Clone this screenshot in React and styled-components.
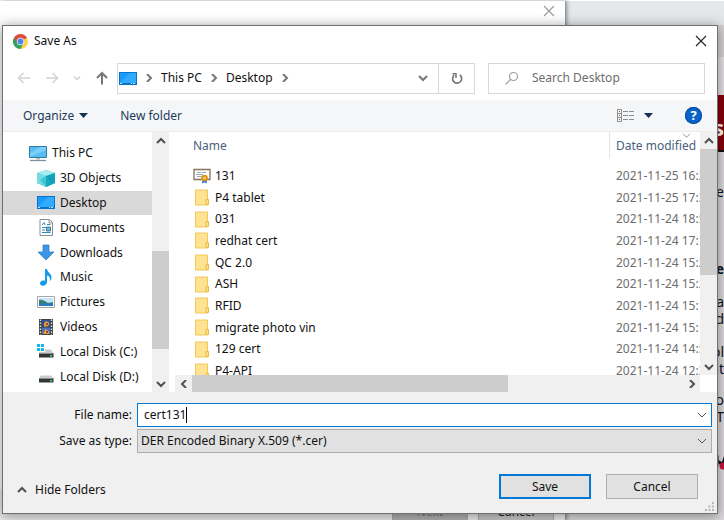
import React from "react";
import styled, { createGlobalStyle } from "styled-components";

const GlobalStyle = createGlobalStyle`
  * { box-sizing: border-box; }
  body { margin: 0; background: #e0dfe0; }
  body, button, input, select, table {
    font-family: "Noto Sans", "Open Sans", sans-serif;
    font-size: 12px;
    line-height: 16px;
    color: #111;
  }
  button { border: 0; padding: 0; background: none; }
  svg { display: block; flex: none; }
`;

/* ---------- page behind the dialog ---------- */

const Desktop = styled.div`
  position: relative;
  display: flex;
  min-height: 100vh;
  overflow: hidden;
`;

const Backdrop = styled.div`
  position: absolute;
  inset: 0;
  display: flex;
  border-top: 1px solid #fff;
`;

const Wizard = styled.section`
  width: 566px;
  flex: none;
  display: flex;
  flex-direction: column;
  justify-content: space-between;
  align-items: flex-end;
  background: linear-gradient(#fff 0 488px, #efefef 488px);
  border-right: 1px solid #999;
  box-shadow: 1px 0 4px rgba(0, 0, 0, 0.4);
  z-index: 1;
`;

const WizardClose = styled.button`
  margin: 4px 10px 0 0;
`;

const WizardActions = styled.div`
  display: flex;
  gap: 10px;
  padding-right: 11px;
`;

const WizardButton = styled.button`
  width: 76px;
  height: 21px;
  padding-top: 4px;
  flex: none;
  border: 1px solid #aaa;
  border-bottom: 0;
  background: ${(p) => (p.disabled ? "#b4b4b4" : "#ccc")};
  color: ${(p) => (p.disabled ? "#777" : "#222")};
`;

const Site = styled.section`
  flex: 1;
  display: flex;
  flex-direction: column;
  align-items: stretch;
  background: #dedcde;
`;

const SiteTabs = styled.div`
  height: 24px;
  background: #e4e8ea;
`;

const SiteBar = styled.div`
  height: ${(p) => p.$h}px;
  background: ${(p) => p.$bg};
`;

const SiteBanner = styled.div`
  height: 57px;
  padding: 22px 0 0 0;
  background: #86000c;
  border-bottom: 2px solid #111;
  color: #fff;
  font-size: 22px;
  line-height: 20px;
  font-weight: bold;
  text-align: right;
`;

const SiteText = styled.div`
  display: grid;
  justify-items: end;
  padding-top: ${(p) => p.$gap}px;
  font-size: 14px;
  line-height: 17px;
  font-weight: ${(p) => (p.$bold ? "bold" : "normal")};
`;

const SiteMark = styled.div`
  display: flex;
  justify-content: flex-end;
  padding-top: 23px;
`;

/* ---------- dialog ---------- */

const Dialog = styled.form`
  position: relative;
  z-index: 2;
  flex: 1;
  min-width: 0;
  display: flex;
  flex-direction: column;
  margin: 25px 6px 6px 2px;
  border: 1px solid #707070;
  background: #fff;
  box-shadow: 0 2px 12px 1px rgba(0, 0, 0, 0.38);
`;

const TitleBar = styled.header`
  display: flex;
  align-items: center;
  gap: 6px;
  height: 30px;
  padding: 0 10px;
`;

const Title = styled.h1`
  flex: 1;
  margin: 0;
  font-size: 12px;
  font-weight: normal;
  line-height: 16px;
`;

const Navigation = styled.nav`
  display: flex;
  align-items: center;
  height: 44px;
  padding: 0 12px 0 14px;
`;

const HistoryButtons = styled.div`
  display: flex;
  align-items: center;
  justify-content: space-between;
  width: 92px;
  margin-right: 8px;
`;

const AddressBar = styled.div`
  flex: 1;
  display: flex;
  height: 31px;
  margin-right: 13px;
  border: 1px solid #d9d9d9;
`;

const Crumbs = styled.div`
  flex: 1;
  display: flex;
  align-items: center;
  gap: 8px;
  padding: 0 10px 0 1px;
`;

const Spacer = styled.span`
  flex: 1;
`;

const Refresh = styled.button`
  display: grid;
  place-items: center;
  width: 36px;
  border-left: 1px solid #d9d9d9;
`;

const Search = styled.label`
  flex: 0 1 217px;
  min-width: 0;
  display: flex;
  align-items: center;
  gap: 13px;
  height: 31px;
  padding: 0 15px;
  border: 1px solid #d9d9d9;
`;

const SearchInput = styled.input`
  flex: 1;
  min-width: 0;
  padding: 0;
  border: 0;
  outline: 0;
  &::placeholder { color: #6d6d6d; opacity: 1; }
`;

const Toolbar = styled.div`
  display: flex;
  align-items: center;
  height: 32px;
  padding: 0 15px 0 20px;
  background: #f4f6f8;
  border-bottom: 1px solid #ececec;
`;

const ToolButton = styled.button`
  display: flex;
  align-items: center;
  gap: ${(p) => p.$gap || 5}px;
  margin-right: ${(p) => p.$after || 0}px;
  color: #1e395b;
`;

const HelpButton = styled.button`
  width: 17px;
  height: 17px;
  border-radius: 50%;
  background: #0a63c9;
  box-shadow: inset 0 0 0 1px #064a98;
  color: #fff;
  font-weight: bold;
  font-size: 13px;
  line-height: 17px;
`;

const Panes = styled.div`
  flex: 1;
  display: flex;
`;

const Tree = styled.ul`
  width: 149px;
  height: 248px;
  margin: 9px 0 0;
  padding: 0;
  list-style: none;
  display: grid;
  grid-template-rows: repeat(10, 1fr);
`;

const TreeItem = styled.li`
  display: flex;
  background: ${(p) => (p.$selected ? "#d9d9d9" : "transparent")};
`;

const TreeButton = styled.button`
  flex: 1;
  display: flex;
  align-items: center;
  gap: 5px;
  padding-left: ${(p) => (p.$root ? 26 : 34)}px;
  white-space: nowrap;
`;

const ScrollTrack = styled.div`
  display: flex;
  flex-direction: ${(p) => (p.$horizontal ? "row" : "column")};
  justify-content: space-between;
  flex: none;
  width: ${(p) => (p.$horizontal ? "auto" : "17px")};
  height: ${(p) => (p.$horizontal ? "17px" : "auto")};
  background: #f0f0f0;
`;

const ScrollButton = styled.button`
  display: grid;
  place-items: center;
  flex: none;
  width: 17px;
  height: 17px;
`;

const ScrollLane = styled.div`
  flex: 1;
  display: flex;
  flex-direction: ${(p) => (p.$horizontal ? "row" : "column")};
`;

const Before = styled.div`
  flex: ${(p) => p.$part} 0 0;
`;

const Thumb = styled.div`
  flex: ${(p) => p.$part} 0 0;
  background: #cdcdcd;
`;

const Browser = styled.div`
  flex: 1;
  min-width: 0;
  display: flex;
  margin-left: 6px;
`;

const ListColumn = styled.div`
  flex: 1;
  min-width: 0;
  display: flex;
  flex-direction: column;
`;

const ListViewport = styled.div`
  flex: 1;
  min-height: 0;
  overflow: hidden;
  contain: size;
`;

const FileTable = styled.table`
  width: 100%;
  height: 250px;
  table-layout: fixed;
  border-collapse: collapse;
`;

const Heading = styled.th`
  height: 33px;
  width: ${(p) => (p.$date ? "91px" : "auto")};
  padding: 0 0 6px ${(p) => (p.$date ? 7 : 18)}px;
  text-align: left;
  vertical-align: middle;
  font-weight: normal;
  white-space: nowrap;
  color: #4c607a;
  background: ${(p) =>
    p.$date ? "linear-gradient(#e2e2e2, #e2e2e2) 0 0 / 1px 26px no-repeat" : "none"};
`;

const SortMark = styled.span`
  position: absolute;
  right: 26px;
  top: 106px;
`;

const NameCell = styled.td`
  padding: 0 0 0 18px;
`;

const FileName = styled.div`
  display: flex;
  align-items: center;
  gap: 4px;
  height: 16px;
`;

const DateCell = styled.td`
  padding: 0 0 0 7px;
  overflow: hidden;
  white-space: nowrap;
  color: #6d6d6d;
`;

const SideScroll = styled.div`
  display: flex;
  padding-bottom: 17px;
`;

const Footer = styled.footer`
  background: #f0f0f0;
  padding: 11px 5px 14px 0;
`;

const Fields = styled.div`
  display: grid;
  grid-template-columns: 129px 1fr;
  column-gap: 5px;
  row-gap: 2px;
  align-items: center;
`;

const FieldLabel = styled.label`
  text-align: right;
`;

const Combo = styled.div`
  display: grid;
  grid-template-columns: 1fr 18px;
  align-items: center;
  height: 24px;
  border: 1px solid ${(p) => (p.$active ? "#0078d7" : "#adadad")};
  background: ${(p) => (p.$active ? "#fff" : "#e1e1e1")};
`;

const NameEntry = styled.div`
  display: flex;
  align-items: center;
  padding-left: 6px;
`;

const NameInput = styled.input`
  field-sizing: content;
  padding: 0;
  border: 0;
  outline: 0;
  background: none;
`;

const Caret = styled.span`
  width: 1px;
  height: 16px;
  background: #000;
`;

const NameArrow = styled.button`
  justify-self: center;
`;

const TypeSelect = styled.select`
  grid-area: 1 / 1 / 2 / 3;
  appearance: none;
  height: 22px;
  padding: 0 0 0 3px;
  border: 0;
  outline: 0;
  background: none;
`;

const TypeArrow = styled.span`
  grid-area: 1 / 2 / 2 / 3;
  justify-self: center;
  pointer-events: none;
`;

const Actions = styled.div`
  display: flex;
  align-items: center;
  gap: 15px;
  margin-top: 21px;
  padding: 0 14px 0 14px;
`;

const HideFolders = styled.button`
  display: flex;
  align-items: center;
  gap: 8px;
  height: 16px;
  margin: 7px auto 0 0;
`;

const PushButton = styled.button`
  width: 92px;
  height: 25px;
  border: ${(p) => (p.$primary ? "2px solid #0078d7" : "1px solid #adadad")};
  background: #e1e1e1;
`;

const Grip = styled.span`
  position: absolute;
  right: 3px;
  bottom: 2px;
`;

/* ---------- drawings ---------- */

const shapes = {
  up: "M1 6 5 2 9 6",
  down: "M1 2 5 6 9 2",
  left: "M6 0 2 4 6 8",
  right: "M2 0 6 4 2 8",
};

function Chevron({ dir, color = "#505050", size = 8, weight = 2 }) {
  const flat = dir === "up" || dir === "down";
  return (
    <svg
      width={flat ? size + 2 : size}
      height={size}
      viewBox={flat ? "0 0 10 8" : "0 0 8 8"}
      fill="none"
      stroke={color}
      strokeWidth={weight}
    >
      <path d={shapes[dir]} />
    </svg>
  );
}

function Cross({ color }) {
  return (
    <svg width="12" height="12" viewBox="0 0 12 12" stroke={color} strokeWidth="1.1">
      <path d="M1 1 11 11M11 1 1 11" />
    </svg>
  );
}

function ArrowGlyph({ d, color, width = 14, weight = 1.6 }) {
  return (
    <svg width={width} height="14" viewBox="0 0 14 14" fill="none" stroke={color} strokeWidth={weight}>
      <path d={d} />
    </svg>
  );
}

function ChromeIcon() {
  return (
    <svg width="15" height="15" viewBox="0 0 16 16">
      <path d="M8 8 1.07 4A8 8 0 0 1 14.93 4Z" fill="#dd4b3e" />
      <path d="M8 8V4.2H15A8 8 0 0 1 8 16Z" fill="#ffd24a" />
      <path d="M8 8 11.3 9.9 8 16A8 8 0 0 1 1.07 4Z" fill="#2fa457" />
      <path d="M8 8 4.7 9.9 1.07 4 5 3.9 8 4.2H15L14.9 4Z" fill="#dd4b3e" />
      <circle cx="8" cy="8" r="3.9" fill="#f3f3f3" />
      <circle cx="8" cy="8" r="3.1" fill="#4a86ee" />
    </svg>
  );
}

function DesktopIcon() {
  return (
    <svg width="18" height="15" viewBox="0 0 18 15">
      <path d="M0 1H18V14H0Z" fill="#0b73c4" />
      <path d="M1 2H17V12H1Z" fill="#1b9bfa" />
      <path d="M1 12 11 2H17V12Z" fill="#2fabff" />
      <path d="M1 12.500H3M12 12.500H13M14 12.500H16" stroke="#bfe2fb" />
    </svg>
  );
}

function PcIcon() {
  return (
    <svg width="18" height="17" viewBox="0 0 18 17">
      <path d="M.5 1.500H17.500V12.500H.5Z" fill="#56bdf4" stroke="#32789f" />
      <path d="M1 12V8L12 2H17V5Z" fill="#8bd7fb" opacity=".7" />
      <path d="M7 13H11V14.500H7Z" fill="#b4bfc7" />
      <path d="M1 15.500H17" stroke="#7e929f" strokeWidth="1.300" />
    </svg>
  );
}

function CubeIcon() {
  return (
    <svg width="18" height="17" viewBox="0 0 18 17">
      <path d="M0 3 9 0 18 3V13L9 17 0 13Z" fill="#35c3d3" />
      <path d="M0 3 9 0 18 3 9 6Z" fill="#a5edf0" />
      <path d="M0 3 9 6V17L0 13Z" fill="#72dce3" />
      <path d="M9 6 18 3V13L9 17Z" fill="#12a2b7" />
      <path d="M9 6 14 12 9 17 3 10Z" fill="#1cb2c6" opacity=".55" />
    </svg>
  );
}

function DocumentIcon() {
  return (
    <svg width="18" height="17" viewBox="0 0 18 17">
      <path d="M3 .5H12.500L15.500 3.500V16.500H3Z" fill="#fff" stroke="#888f94" />
      <path d="M12 1V4H15" fill="#dfe3e6" stroke="#999" />
      <path d="M5 6 7 3.500 8 6M5 8.500H9M10 5.500H13.500M5 11H8M5 13.500H13.500" stroke="#2c87bb" fill="none" />
      <path d="M9.500 8H13.500V12H9.500Z" fill="#63b5dc" stroke="#4c7c91" />
    </svg>
  );
}

function DownloadIcon() {
  return (
    <svg width="18" height="17" viewBox="0 0 18 17">
      <path d="M6 1H12V8H17L9 16 1 8H6Z" fill="#3d96e4" stroke="#2379c5" strokeWidth=".7" />
    </svg>
  );
}

function MusicIcon() {
  return (
    <svg width="18" height="17" viewBox="0 0 18 17">
      <path d="M8 0H10C10.500 4 15 4.500 14.500 9C14.400 10.500 13.500 11.500 12.500 12C14 8.500 12 7 10 6.500V13C10 15.500 7.500 17 5.500 16.800C2 16.400 2.300 12 6 11.500C7 11.400 7.500 11.500 8 11.700Z" fill="#139bed" />
    </svg>
  );
}

function PictureIcon() {
  return (
    <svg width="18" height="14" viewBox="0 0 18 14">
      <path d="M.5 1.500H17.500V12.500H.5Z" fill="#fff" stroke="#a3a7a9" />
      <path d="M2 3H16V11H2Z" fill="#c7e3f6" />
      <path d="M2 5C5 4 8 6 10 7.500C12 8.500 14 7 16 7V9H2Z" fill="#3b7e72" />
      <path d="M2 8.500H16V11H2Z" fill="#2c7ac2" />
    </svg>
  );
}

function VideoIcon() {
  return (
    <svg width="18" height="17" viewBox="0 0 18 17">
      <path d="M2 1H16V17H2Z" fill="#3d3f42" />
      <path d="M5 2H13V8.500H5Z" fill="#304f9d" />
      <path d="M5 9.500H13V16H5Z" fill="#4372c0" />
      <path d="M7 8.500V5.500L9 3 12 4.500V7L10 8.500ZM6 16 8.500 11 12 13.500V16Z" fill="#e9a52a" />
      <path d="M9 5H11V7H9ZM9 13H11V15H9Z" fill="#ad3f3a" />
      <path d="M3.500 1.500V17M14.500 1.500V17" stroke="#dfe2e4" strokeWidth="1.500" strokeDasharray="1.500 1.500" />
    </svg>
  );
}

function DiskIcon({ system }) {
  return (
    <svg width="18" height="17" viewBox="0 0 18 17">
      {system && <path d="M0 1H3V4H0ZM4 1H7V4H4ZM0 5H3V8H0ZM4 5H7V8H4Z" fill="#18b5ef" />}
      <path d={system ? "M8 6.500H14L16.500 10.500H2V9H8Z" : "M4 7.500H14L16.500 10.500H2Z"} fill="#c9cccd" />
      <path d="M2 10H16.500V14.500H2Z" fill="#333638" />
      <path d="M2 10.500H16.500" stroke="#8b8f91" />
      <path d="M13 12H15V13.500H13Z" fill="#45dc64" />
    </svg>
  );
}

function FolderIcon() {
  return (
    <svg width="18" height="17" viewBox="0 0 18 17">
      <path d="M2.500 1H14.500V16H2.500Z" fill="#ffe392" stroke="#efca57" />
      <path d="M13 10.500H15.500V15.500H13Z" fill="#ffdf83" stroke="#e6bd42" />
    </svg>
  );
}

function CertificateIcon() {
  return (
    <svg width="18" height="17" viewBox="0 0 18 17">
      <path d="M1 2.500H17V12.500H1Z" fill="#fff" stroke="#85715c" strokeWidth="1.300" />
      <path d="M4 5.500H8M9 5.500H13M3 7.500H10M4 9.500H9" stroke="#9aa6bd" />
      <path d="M9.500 12 9 16.500 11.500 15.200 14 16.500 13.500 12Z" fill="#346fcf" />
      <circle cx="11.500" cy="11" r="3.300" fill="#dc950f" />
      <circle cx="11.500" cy="11" r="1.500" fill="#f6c759" />
    </svg>
  );
}

function ViewIcon() {
  return (
    <svg width="18" height="13" viewBox="0 0 18 13" fill="none">
      <path d="M.5.500H4.500V12.500H.5ZM.5 4.500H4.500M.5 8.500H4.500" stroke="#8d8d8d" />
      <path d="M2 2.500H3M2 6.500H3M2 10.500H3" stroke="#b04a4a" />
      <path d="M6 2.500H11M12 2.500H17M6 6.500H11M12 6.500H17M6 10.500H11M12 10.500H17" stroke="#8d8d8d" />
    </svg>
  );
}

function Triangle() {
  return (
    <svg width="9" height="5" viewBox="0 0 9 5">
      <path d="M0 0H9L4.500 5Z" fill="#17325a" />
    </svg>
  );
}

function RefreshIcon() {
  return (
    <svg width="12" height="13" viewBox="0 0 12 13" fill="none" stroke="#777" strokeWidth="1.700">
      <path d="M8.800 3A4.500 4.500 0 1 1 3.200 3.200" />
      <path d="M1.500 1.800H5V6" strokeWidth="1.500" />
    </svg>
  );
}

function SearchIcon() {
  return (
    <svg width="15" height="15" viewBox="0 0 15 15" fill="none" stroke="#a0a0a0" strokeWidth="1.200">
      <circle cx="9.500" cy="5.500" r="4" />
      <path d="M6.500 8.500 1.500 13.500" />
    </svg>
  );
}

function GripIcon() {
  return (
    <svg width="9" height="9" viewBox="0 0 9 9" fill="#b5b5b5">
      <path d="M7 0H9V2H7ZM7 3.500H9V5.500H7ZM7 7H9V9H7ZM3.500 3.500H5.500V5.500H3.500ZM3.500 7H5.500V9H3.500ZM0 7H2V9H0Z" />
    </svg>
  );
}

function BackdropMark() {
  return (
    <svg width="8" height="24" viewBox="0 0 8 24">
      <path d="M0 5 3 8V18L0 16Z" fill="#777" />
      <path d="M2 12 6 14 8 8V18L3 16Z" fill="#15121c" />
      <circle cx="7" cy="18" r="3.500" fill="#cf1240" />
    </svg>
  );
}

/* ---------- data ---------- */

const places = [
  ["This PC", <PcIcon />],
  ["3D Objects", <CubeIcon />],
  ["Desktop", <DesktopIcon />],
  ["Documents", <DocumentIcon />],
  ["Downloads", <DownloadIcon />],
  ["Music", <MusicIcon />],
  ["Pictures", <PictureIcon />],
  ["Videos", <VideoIcon />],
  ["Local Disk (C:)", <DiskIcon system />],
  ["Local Disk (D:)", <DiskIcon />],
];

const files = [
  ["131", "2021-11-25 16:24"],
  ["P4 tablet", "2021-11-25 17:31"],
  ["031", "2021-11-24 18:51"],
  ["redhat cert", "2021-11-24 17:12"],
  ["QC 2.0", "2021-11-24 15:24"],
  ["ASH", "2021-11-24 15:22"],
  ["RFID", "2021-11-24 15:19"],
  ["migrate photo vin", "2021-11-24 15:16"],
  ["129 cert", "2021-11-24 14:56"],
  ["P4-API", "2021-11-24 12:35"],
];

function Scrollbar({ horizontal, before, thumb, after }) {
  return (
    <ScrollTrack $horizontal={horizontal}>
      <ScrollButton type="button" aria-label="Scroll back">
        <Chevron dir={horizontal ? "left" : "up"} />
      </ScrollButton>
      <ScrollLane $horizontal={horizontal}>
        <Before $part={before} />
        <Thumb $part={thumb} />
        <Before $part={after} />
      </ScrollLane>
      <ScrollButton type="button" aria-label="Scroll forward">
        <Chevron dir={horizontal ? "right" : "down"} />
      </ScrollButton>
    </ScrollTrack>
  );
}

export default function App() {
  return (
    <Desktop>
      <GlobalStyle />
      <Backdrop>
        <Wizard>
          <WizardClose aria-label="Close wizard"><Cross color="#999" /></WizardClose>
          <WizardActions>
            <WizardButton disabled>Next</WizardButton>
            <WizardButton>Cancel</WizardButton>
          </WizardActions>
        </Wizard>
        <Site>
          <SiteTabs />
          <SiteBar $h={32} $bg="#d8d4d6" />
          <SiteBar $h={38} $bg="#e6e4e6" />
          <SiteBanner>s</SiteBanner>
          <SiteText $gap={31}><span>e</span></SiteText>
          <SiteText $gap={60} $bold><span>e</span></SiteText>
          <SiteText $gap={16}><span>a</span><span>d</span></SiteText>
          <SiteText $gap={16}><span>ol</span><span>nt</span></SiteText>
          <SiteText $gap={14}><span>o</span><span>T</span></SiteText>
          <SiteMark><BackdropMark /></SiteMark>
        </Site>
      </Backdrop>

      <Dialog onSubmit={(e) => e.preventDefault()}>
        <TitleBar>
          <ChromeIcon />
          <Title>Save As</Title>
          <button type="button" aria-label="Close"><Cross color="#222" /></button>
        </TitleBar>

        <Navigation>
          <HistoryButtons>
            <button type="button" aria-label="Back">
              <ArrowGlyph d="M13 7H1.500M6.500 2 1.500 7 6.500 12" color="#d4d4d4" />
            </button>
            <button type="button" aria-label="Forward">
              <ArrowGlyph d="M1 7H12.500M7.500 2 12.500 7 7.500 12" color="#d4d4d4" />
            </button>
            <button type="button" aria-label="Recent locations"><Chevron dir="down" size={6} color="#d4d4d4" /></button>
            <button type="button" aria-label="Up">
              <ArrowGlyph d="M7 13.500V2M2 7 7 2 12 7" color="#757575" weight={2} />
            </button>
          </HistoryButtons>
          <AddressBar>
            <Crumbs>
              <DesktopIcon />
              <Chevron dir="right" color="#777" />
              <button type="button">This PC</button>
              <Chevron dir="right" color="#777" />
              <button type="button">Desktop</button>
              <Chevron dir="right" color="#777" />
              <Spacer />
              <button type="button" aria-label="Previous locations"><Chevron dir="down" color="#777" /></button>
            </Crumbs>
            <Refresh type="button" aria-label="Refresh"><RefreshIcon /></Refresh>
          </AddressBar>
          <Search>
            <SearchIcon />
            <SearchInput placeholder="Search Desktop" aria-label="Search Desktop" />
          </Search>
        </Navigation>

        <Toolbar>
          <ToolButton type="button" $after={32}>Organize <Triangle /></ToolButton>
          <ToolButton type="button">New folder</ToolButton>
          <Spacer />
          <ToolButton type="button" $gap={9} $after={32} aria-label="Change view"><ViewIcon /><Triangle /></ToolButton>
          <HelpButton type="button" aria-label="Help">?</HelpButton>
        </Toolbar>

        <Panes>
          <Tree>
            {places.map(([name, icon], i) => (
              <TreeItem key={name} $selected={name === "Desktop"}>
                <TreeButton type="button" $root={i === 0}>{icon}{name}</TreeButton>
              </TreeItem>
            ))}
          </Tree>
          <Scrollbar before={102} thumb={97} after={26} />
          <Browser>
            <ListColumn>
              <ListViewport>
                <FileTable>
                  <thead>
                    <tr>
                      <Heading>Name</Heading>
                      <Heading $date>Date modified</Heading>
                    </tr>
                  </thead>
                  <tbody>
                    {files.map(([name, date]) => (
                      <tr key={name}>
                        <NameCell>
                          <FileName>{name === "131" ? <CertificateIcon /> : <FolderIcon />}{name}</FileName>
                        </NameCell>
                        <DateCell>{date}</DateCell>
                      </tr>
                    ))}
                  </tbody>
                </FileTable>
              </ListViewport>
              <Scrollbar horizontal before={0} thumb={315} after={175} />
            </ListColumn>
            <SideScroll>
              <Scrollbar before={0} thumb={125} after={83} />
            </SideScroll>
          </Browser>
        </Panes>
        <SortMark><Chevron dir="down" size={7} weight={1} color="#888" /></SortMark>

        <Footer>
          <Fields>
            <FieldLabel htmlFor="file-name">File name:</FieldLabel>
            <Combo $active>
              <NameEntry>
                <NameInput id="file-name" defaultValue="cert131" />
                <Caret />
              </NameEntry>
              <NameArrow type="button" aria-label="Recent names"><Chevron dir="down" weight={1} color="#555" /></NameArrow>
            </Combo>
            <FieldLabel htmlFor="file-type">Save as type:</FieldLabel>
            <Combo>
              <TypeSelect id="file-type">
                <option>DER Encoded Binary X.509 (*.cer)</option>
              </TypeSelect>
              <TypeArrow><Chevron dir="down" weight={1} color="#555" /></TypeArrow>
            </Combo>
          </Fields>
          <Actions>
            <HideFolders type="button"><Chevron dir="up" />Hide Folders</HideFolders>
            <PushButton type="submit" $primary>Save</PushButton>
            <PushButton type="button">Cancel</PushButton>
          </Actions>
        </Footer>
        <Grip><GripIcon /></Grip>
      </Dialog>
    </Desktop>
  );
}
